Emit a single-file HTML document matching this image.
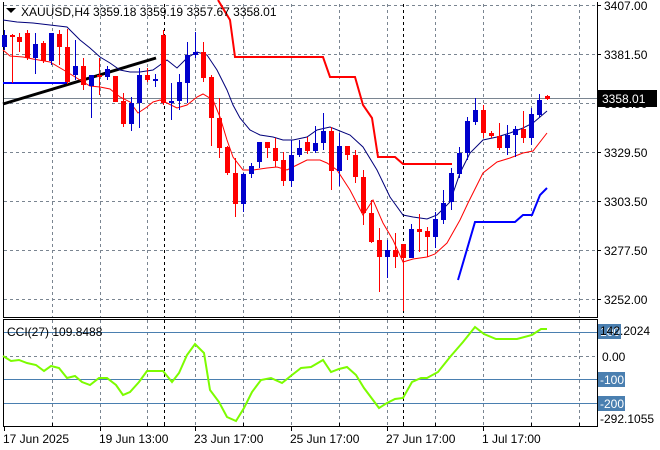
<!DOCTYPE html>
<html><head><meta charset="utf-8"><style>
html,body{margin:0;padding:0;background:#fff;width:660px;height:450px;overflow:hidden}
svg text{font-family:"Liberation Sans","DejaVu Sans",sans-serif;font-size:12px;fill:#000}
</style></head><body>
<svg width="660" height="450" viewBox="0 0 660 450" xmlns="http://www.w3.org/2000/svg">
<rect width="660" height="450" fill="#fff"/>
<!-- grid main -->
<g stroke="#7a8591" stroke-width="1" stroke-dasharray="3,3" fill="none">
<path d="M4 5.5H597M4 54.5H597M4 103.5H597M4 152.5H597M4 201.5H597M4 250.5H597M4 299.5H597"/>
<path d="M52.5 4V317M100.5 4V317M147.5 4V317M195.5 4V317M243.5 4V317M291.5 4V317M339.5 4V317M387.5 4V317M435.5 4V317M483.5 4V317M531.5 4V317M579.5 4V317"/>
<path d="M52.5 320V426M100.5 320V426M147.5 320V426M195.5 320V426M243.5 320V426M291.5 320V426M339.5 320V426M387.5 320V426M435.5 320V426M483.5 320V426M531.5 320V426M579.5 320V426"/>
<path d="M4 356.5H597"/>
</g>
<g stroke="#000" stroke-dasharray="3,3">
<path d="M164.5 4V317M403.5 4V317M164.5 320V426M403.5 320V426"/>
</g>
<!-- current price line -->
<path d="M4 98.5H597" stroke="#7a8591"/>
<!-- borders -->
<g stroke="#000" fill="none">
<path d="M3.5 2V317.5H597.5V2"/>
<path d="M3.5 319.5H597.5V426.5H3.5Z"/>
<path d="M597 5.5h4M597 54.5h4M597 103.5h4M597 152.5h4M597 201.5h4M597 250.5h4M597 299.5h4"/>
<path d="M4.5 427v4M52.5 427v-4M100.5 427v4M147.5 427v-4M164.5 427v-4M195.5 427v4M243.5 427v-4M291.5 427v4M339.5 427v-4M387.5 427v4M403.5 427v-4M435.5 427v-4M483.5 427v4M531.5 427v-4M579.5 427v-4"/>
</g>
<!-- thick lines -->
<path d="M218 0L230 20L235 57L323 57L330 77L355 77L363 105L372 118L378 157L395 157L403 164L452 164" stroke="#f00" stroke-width="2" fill="none"/>
<path d="M3 83H67" stroke="#0000ff" stroke-width="2"/>
<path d="M458 280L475 222L515 222L523 215L532 215L540 195L547 188" stroke="#0000ff" stroke-width="2" fill="none"/>
<path d="M3 104L156 58" stroke="#000" stroke-width="3"/>
<!-- MAs -->
<polyline fill="none" stroke="#00007a" stroke-width="1" points="3,20 17,22 33,23 50,25 67,27 80,40 90,48 100,57 110,63 120,70 130,72 140,72 153,70 160,65 167,60 177,68 187,58 197,52 207,55 217,70 227,90 233,105 240,118 250,130 260,135 273,137 283,140 293,140 307,137 317,130 330,127 350,135 363,147 377,170 390,197 403,215 413,217 427,219 437,215 450,202 460,173 470,153 483,140 497,137 510,133 523,128 533,123 547,111"/>
<polyline fill="none" stroke="#f00" stroke-width="1" points="3,50 10,56 23,57 33,59 50,62 67,72 80,80 90,86 100,87 110,89 120,97 130,102 138,113 147,107 153,102 160,100 167,103 177,108 187,105 197,97 203,94 213,100 220,117 227,140 233,157 243,170 253,170 267,168 277,167 287,170 297,165 307,160 320,160 327,163 337,170 350,190 363,215 373,200 383,223 393,240 403,262 413,259 427,257 435,254 447,243 460,220 468,203 483,173 497,162 510,158 523,153 533,151 547,133"/>
<!-- candles -->
<g id="c">
<!-- [x, top, bot, wt, wb, col] rendered as rects -->
</g>
<g stroke-width="1">
<g stroke="#0000cc" fill="#0000cc">
<path d="M4.5 30V50M35.5 33V74M51.5 33V65M75.5 40V80M91.5 76V118M107.5 66V80M131.5 97V131M139.5 68V128M155.5 74V87M171.5 83V120M179.5 74V110M187.5 42V103M195.5 32V58M243.5 173V212M251.5 163V178M259.5 142V168M291.5 140V187M299.5 140V157M315.5 126V153M323.5 113V150M339.5 133V186M387.5 240V278M411.5 224V258M435.5 212V248M443.5 190V224M451.5 168V210M459.5 147V178M467.5 117V160M475.5 98V125M507.5 125V155M515.5 126V157M531.5 108V145M539.5 94V117"/>
</g>
<g fill="#0000cc">
<rect x="2" y="35" width="5" height="12"/><rect x="33" y="44" width="5" height="14"/><rect x="49" y="33" width="5" height="28"/>
<rect x="73" y="66" width="5" height="9"/><rect x="89" y="75" width="5" height="11"/><rect x="105" y="69" width="5" height="8"/>
<rect x="129" y="103" width="5" height="21"/><rect x="137" y="75" width="5" height="28"/><rect x="153" y="79" width="5" height="2"/>
<rect x="169" y="101" width="5" height="2"/><rect x="177" y="82" width="5" height="19"/><rect x="185" y="55" width="5" height="28"/>
<rect x="193" y="52" width="5" height="3"/><rect x="241" y="174" width="5" height="30"/><rect x="249" y="166" width="5" height="8"/>
<rect x="257" y="142" width="5" height="20"/><rect x="289" y="155" width="5" height="26"/><rect x="297" y="148" width="5" height="7"/>
<rect x="313" y="143" width="5" height="8"/><rect x="321" y="131" width="5" height="12"/><rect x="337" y="146" width="5" height="25"/>
<rect x="385" y="250" width="5" height="7"/><rect x="409" y="229" width="5" height="29"/><rect x="433" y="219" width="5" height="18"/>
<rect x="441" y="203" width="5" height="17"/><rect x="449" y="173" width="5" height="29"/><rect x="457" y="153" width="5" height="21"/>
<rect x="465" y="121" width="5" height="32"/><rect x="473" y="110" width="5" height="12"/><rect x="505" y="135" width="5" height="13"/>
<rect x="513" y="129" width="5" height="6"/><rect x="529" y="114" width="5" height="24"/><rect x="537" y="100" width="5" height="15"/>
</g>
<g stroke="#f00">
<path d="M12.5 34V83M19.5 33V52M27.5 30V60M43.5 41V63M59.5 30V65M67.5 29V84M83.5 58V90M99.5 58V95M115.5 76V102M123.5 93V127M147.5 68V82M163.5 30V105M203.5 42V82M211.5 75V146M219.5 98V158M227.5 146V175M235.5 158V217M267.5 142V158M275.5 138V167M283.5 152V186M307.5 137V154M331.5 127V190M347.5 146V160M355.5 150V183M363.5 170V225M371.5 200V243M379.5 228V292M395.5 233V268M403.5 244V311M419.5 214V252M427.5 227V257M483.5 105V138M491.5 131V138M499.5 123V150M523.5 111V143M547.5 95V100"/>
</g>
<g fill="#f00">
<rect x="10" y="35" width="5" height="2"/><rect x="17" y="37" width="5" height="5"/><rect x="25" y="33" width="5" height="25"/>
<rect x="41" y="43" width="5" height="18"/><rect x="57" y="34" width="5" height="13"/><rect x="65" y="47" width="5" height="35"/>
<rect x="81" y="66" width="5" height="19"/><rect x="97" y="75" width="5" height="2"/><rect x="113" y="76" width="5" height="26"/>
<rect x="121" y="101" width="5" height="23"/><rect x="145" y="75" width="5" height="5"/><rect x="161" y="35" width="5" height="68"/>
<rect x="201" y="52" width="5" height="26"/><rect x="209" y="77" width="5" height="41"/><rect x="217" y="118" width="5" height="30"/>
<rect x="225" y="147" width="5" height="26"/><rect x="233" y="173" width="5" height="31"/><rect x="265" y="142" width="5" height="6"/>
<rect x="273" y="148" width="5" height="13"/><rect x="281" y="160" width="5" height="21"/><rect x="305" y="142" width="5" height="9"/>
<rect x="329" y="131" width="5" height="40"/><rect x="345" y="146" width="5" height="9"/><rect x="353" y="155" width="5" height="22"/>
<rect x="361" y="177" width="5" height="36"/><rect x="369" y="213" width="5" height="29"/><rect x="377" y="240" width="5" height="17"/>
<rect x="393" y="250" width="5" height="7"/><rect x="401" y="244" width="5" height="14"/><rect x="417" y="229" width="5" height="3"/>
<rect x="425" y="231" width="5" height="6"/><rect x="481" y="110" width="5" height="23"/><rect x="489" y="133" width="5" height="3"/>
<rect x="497" y="136" width="5" height="12"/><rect x="521" y="129" width="5" height="9"/><rect x="545" y="96" width="5" height="3"/>
</g>
</g>
<!-- CCI levels -->
<path d="M4 332.5H597M4 379.5H597M4 403.5H597" stroke="#4a7fb0" stroke-width="1"/>
<polyline fill="none" stroke="#7cfc00" stroke-width="2" points="3,356 11,361 19,360 27,363 36,365 44,371 51,366 59,368 67,378 75,376 82,382 90,385 99,378 107,378 116,385 123,395 130,392 139,382 147,371 163,371 172,382 179,373 187,355 195,344 204,353 210,390 219,402 227,417 236,421 244,408 252,392 261,380 271,378 282,383 292,375 301,368 311,367 323,360 331,372 339,369 347,367 356,375 364,388 379,408 387,403 395,399 403,398 412,382 421,378 427,378 438,372 450,357 463,342 475,327 484,334 496,339 517,339 532,335 541,329 547,329"/>
<!-- texts -->
<path d="M6 8h10l-5 5z" fill="#000"/>
<text x="21" y="16">XAUUSD,H4  3359.18 3359.19 3357.67 3358.01</text>
<text x="7" y="336">CCI(27) 109.8488</text>
<g>
<text x="604" y="10">3407.00</text>
<text x="604" y="59">3381.50</text>
<text x="604" y="108">3355.50</text>
<text x="604" y="157">3329.50</text>
<text x="604" y="206">3303.50</text>
<text x="604" y="255">3277.50</text>
<text x="604" y="304">3252.00</text>
</g>
<rect x="598" y="90" width="59" height="17" fill="#000"/>
<text x="602" y="103" style="fill:#fff">3358.01</text>
<rect x="598" y="324" width="23" height="15" fill="#4a7fb0"/>
<text x="600" y="336" style="fill:#fff">100</text>
<text x="600" y="335">142.2024</text>
<text x="602" y="361">0.00</text>
<rect x="598" y="372" width="27" height="15" fill="#4a7fb0"/>
<text x="600" y="384" style="fill:#fff">-100</text>
<rect x="598" y="396" width="27" height="15" fill="#4a7fb0"/>
<text x="600" y="408" style="fill:#fff">-200</text>
<text x="600" y="423">-292.1055</text>
<text x="3" y="443">17 Jun 2025</text>
<text x="99" y="443">19 Jun 13:00</text>
<text x="194" y="443">23 Jun 17:00</text>
<text x="290" y="443">25 Jun 17:00</text>
<text x="386" y="443">27 Jun 17:00</text>
<text x="482" y="443">1 Jul 17:00</text>
</svg>
</body></html>
